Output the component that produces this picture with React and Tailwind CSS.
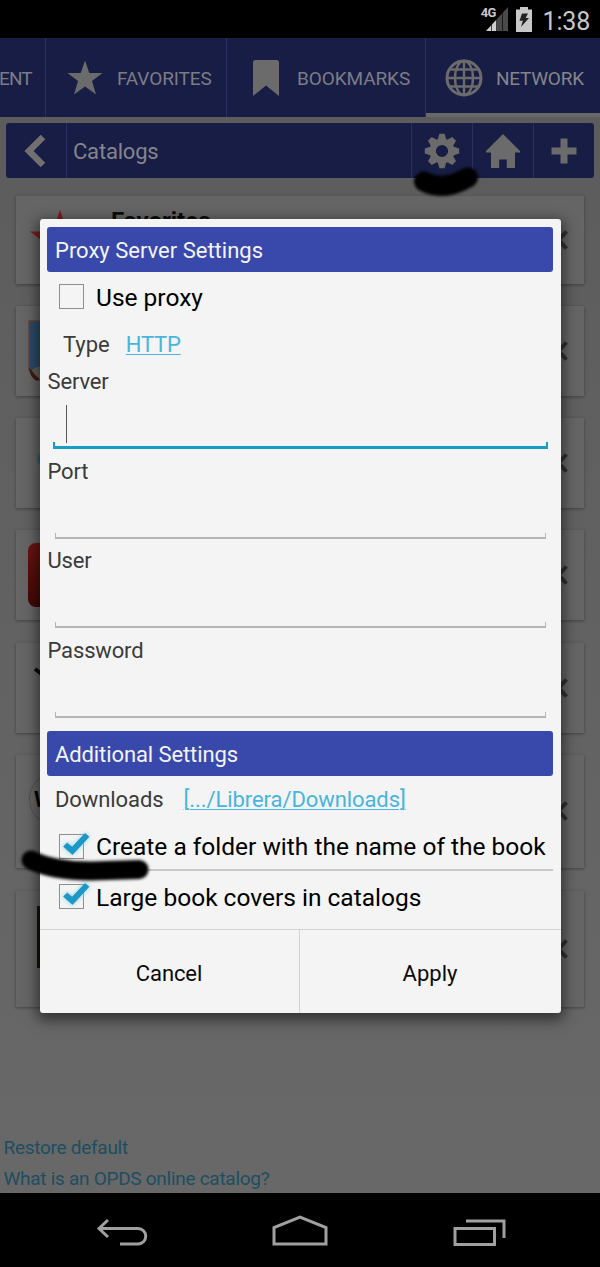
import React from "react";

function Tab({ width, children, active }) {
  return (
    <div className={"relative flex shrink-0 items-center overflow-hidden whitespace-nowrap text-[19px] tracking-[-0.1px] text-[#7c7c84] " + width}>
      {children}
      {active && <div className="absolute inset-x-0 bottom-0 h-1 bg-[#686868]" />}
    </div>
  );
}

function StarIcon({ className }) {
  return (
    <svg viewBox="0 0 36 36" className={className} fill="currentColor">
      <path d="M18 0.5 22.3 13H35.5L25 21 29 34.5 18 26.6 7 34.5 11 21 .5 13h13.2z" />
    </svg>
  );
}

function GearIcon() {
  const teeth = [0, 45, 90, 135, 180, 225, 270, 315];
  return (
    <svg viewBox="-18 -18 36 36" className="h-9 w-9 text-[#6b6b6b]">
      {teeth.map((a) => (
        <path key={a} d="M-4.4-11-2.6-17.2h5.2l1.8 6.200z" fill="currentColor" transform={`rotate(${a})`} />
      ))}
      <circle r="9.3" fill="none" stroke="currentColor" strokeWidth="6.400" />
    </svg>
  );
}

const thumbs = {
  star: <StarIcon className="ml-[13px] h-[62px] w-[62px] text-[#7c1f22]" />,
  boat: (
    <svg viewBox="0 0 60 62" className="ml-3 h-[62px] w-[60px]">
      <path d="M1 1H60V61H1z" fill="#666" />
      <path d="M1 1H60V50H1z" fill="#2c4a66" stroke="#5c4538" strokeWidth="1.5" />
      <path d="M1 48q5 3 11 12l-3 1Q2 58 1 48z" fill="#3f1c17" />
      <path d="M4 50q4-4 9-3v11q-6-1-9-8z" fill="#625e56" />
    </svg>
  ),
  drop: (
    <svg viewBox="0 0 60 60" className="ml-4 h-[60px] w-[60px] blur-[1px]">
      <ellipse cx="9" cy="26" rx="3.500" ry="5" fill="#23586a" />
    </svg>
  ),
  red: <div className="ml-3 h-16 w-16 rounded-lg bg-linear-to-b from-[#6c1411] to-[#3f0906]" />,
  mark: (
    <svg viewBox="0 0 60 60" className="ml-[14px] h-[60px] w-[60px]">
      <path d="M5 11 13 17" stroke="#090909" strokeWidth="4" fill="none" />
    </svg>
  ),
  round: (
    <div className="ml-[13px] flex h-[54px] w-[54px] items-center rounded-full border border-[#505050] pl-1 text-[22px] font-bold text-black">
      W
    </div>
  ),
  book: <div className="ml-[21px] h-[62px] w-11 bg-[#171509]" />,
};

const cards = [
  { id: "star", box: "mt-[17.5px] h-[88px]", title: "Favorites" },
  { id: "boat", box: "mt-[22px] h-[90px]" },
  { id: "drop", box: "mt-[22px] h-[90px]" },
  { id: "red", box: "mt-[22px] h-[90px]" },
  { id: "mark", box: "mt-[23px] h-[90px]" },
  { id: "round", box: "mt-[22px] h-[113px] pb-6" },
  { id: "book", box: "mt-[23px] h-[116px] pb-6" },
];

function Card({ item }) {
  return (
    <div className={"relative mx-4 flex shrink-0 items-center bg-[#656565] shadow-[0_1px_3px_rgba(0,0,0,0.35)] " + item.box}>
      {thumbs[item.id]}
      {item.title && (
        <span className="mb-7 ml-[20px] self-start pt-[11px] text-[24px] leading-7 font-bold text-[#0c0c0c]">{item.title}</span>
      )}
      <svg viewBox="0 0 12 20" className={"ml-auto mr-4 h-5 w-3 " + (item.id === "round" || item.id === "book" ? "translate-y-3" : "")}>
        <path d="M10.500 1.500 2.500 10l8 8.500" fill="none" stroke="#303030" strokeWidth="4" />
      </svg>
    </div>
  );
}

function SectionTitle({ children }) {
  return (
    <div className="mx-[7.5px] flex h-[45px] shrink-0 items-center rounded-[3px] bg-[#3949ab] px-2 pt-0.5 text-[22px] text-[#f4f4f4]">
      {children}
    </div>
  );
}

function Field({ label, focused }) {
  return (
    <div className="flex h-[89.5px] shrink-0 flex-col">
      <span className="mt-[3px] ml-2 text-[22px] leading-7 tracking-[-0.15px] text-[#3b3b3b]">{label}</span>
      <div className="relative mx-[13px] h-[53px]">
        {focused && <div className="absolute top-[9px] left-[13px] h-[38px] w-px bg-[#555]" />}
        <div
          className={
            focused
              ? "absolute inset-x-0 bottom-0 h-[7px] border-x-2 border-b-3 border-[#1a9cc6]"
              : "absolute inset-x-0.5 bottom-0 h-1.5 border-x border-b-2 border-[#b5b5b5]"
          }
        />
      </div>
    </div>
  );
}

function CheckRow({ label, checked, box, lift }) {
  return (
    <div className={"flex shrink-0 items-center pl-[19.5px] " + box}>
      <div className="relative h-[25px] w-[25px] border border-[#8f8f8f]">
        {checked && (
          <svg viewBox="0 0 30 28" className="absolute -top-[4px] left-0 h-7 w-[30px] drop-shadow-[0_0_2px_#6fd0f0]">
            <path d="M3.500 15.500 7.300 12l4.800 4.300L25 2.500l4 3.200L12.500 23.500z" fill="#1c98c8" stroke="#1583b0" strokeWidth="0.6" />
          </svg>
        )}
      </div>
      <span className={"ml-3 text-[24.5px] leading-7 whitespace-nowrap text-black " + (lift ? "pt-0.5" : "pt-[3px]")}>{label}</span>
    </div>
  );
}

function StatusBar() {
  return (
    <div className="flex h-[38px] shrink-0 items-center justify-end bg-black pr-[10px] text-[#c8c8c8]">
      <span className="mb-3 -mr-2.5 text-[13px] font-bold tracking-[-0.8px]">4G</span>
      <svg viewBox="0 0 22 26" className="h-[26px] w-[22px]">
        <path d="M22 1V25H11V13z" fill="#4a4a4a" />
        <path d="M11 13V25H0z" fill="#d0d0d0" />
        <path d="M5.5 17V25M10.5 12V25M16.5 6V25" stroke="#000" strokeWidth=".7" />
      </svg>
      <svg viewBox="0 0 16 25" className="ml-2 h-[25px] w-4">
        <path d="M4 0h8v2.5h4V25H0V2.5h4z" fill="#c8c8c8" />
        <path d="M6 6.5h6L9.7 11H13L5 20l1.8-6.2H3.5z" fill="#222" />
      </svg>
      <span className="ml-[11px] pt-1.5 text-[25px] leading-7 tracking-[-0.2px]">1:38</span>
    </div>
  );
}

function Dialog() {
  return (
    <div className="absolute top-[219px] left-[39.5px] flex h-[793.5px] w-[521px] flex-col rounded-[3px] bg-[#f4f4f4] pt-[7.5px] shadow-[0_4px_13px_3px_rgba(0,0,0,0.5)]">
      <SectionTitle>Proxy Server Settings</SectionTitle>
      <CheckRow label="Use proxy" box="h-[50px]" lift />
      <div className="flex h-[43.5px] shrink-0 items-center pt-0.5 pl-[23.5px] text-[22px]">
        <span className="text-[#3b3b3b]">Type</span>
        <span className="ml-4 tracking-[-0.2px] text-[#48b5de] underline decoration-1 underline-offset-2">HTTP</span>
      </div>
      <Field label="Server" focused />
      <Field label="Port" />
      <Field label="User" />
      <Field label="Password" />
      <div className="h-2 shrink-0" />
      <SectionTitle>
        <span className="tracking-[-0.1px]">Additional Settings</span>
      </SectionTitle>
      <div className="flex h-[47px] shrink-0 items-center pl-[15.5px] text-[22px] tracking-[-0.08px]">
        <span className="text-[#3b3b3b]">Downloads</span>
        <span className="ml-5 text-[#48b5de] underline decoration-1 underline-offset-2">[.../Librera/Downloads]</span>
      </div>
      <CheckRow label="Create a folder with the name of the book" checked box="h-[46px]" lift />
      <div className="mx-[7.5px] h-0.5 shrink-0 bg-[#c8c8c8]" />
      <CheckRow label="Large book covers in catalogs" checked box="h-[50px] mb-[8px]" />
      <div className="flex grow border-t border-[#d2d2d2] text-[22px] text-[#0a0a0a]">
        <div className="flex w-[260px] items-center justify-center border-r border-[#d2d2d2] pt-1 tracking-[-0.1px]">Cancel</div>
        <div className="flex grow items-center justify-center pt-1">Apply</div>
      </div>
    </div>
  );
}

export default function App() {
  return (
    <div
      className="relative flex h-[1267px] w-[600px] flex-col overflow-hidden bg-linear-to-b from-[#5b5b5b] to-[#696969]"
      style={{ fontFamily: 'Roboto, "Liberation Sans", sans-serif' }}
    >
      <StatusBar />
      <div className="flex h-[79px] shrink-0 divide-x divide-[#2b3060] bg-[#181d45]">
        <Tab width="w-[46px]">
          <span className="-ml-px pt-[3px] tracking-[-0.9px]">ENT</span>
        </Tab>
        <Tab width="w-[181px]">
          <StarIcon className="ml-[21px] h-9 w-9 text-[#6b6b6b]" />
          <span className="ml-3.5 pt-[3px]">FAVORITES</span>
        </Tab>
        <Tab width="w-[199px]">
          <svg viewBox="0 0 26 36" className="ml-[26px] h-9 w-[26px]">
            <path d="M2.5 0h21Q26 0 26 2.5V36L13 25.5 0 36V2.5Q0 0 2.5 0z" fill="#6b6b6b" />
          </svg>
          <span className="ml-[18px] pt-[3px]">BOOKMARKS</span>
        </Tab>
        <Tab width="w-[174px]" active>
          <svg viewBox="-19 -19 38 38" className="ml-[19px] h-[38px] w-[38px]" fill="none" stroke="#6b6b6b" strokeWidth="2.400">
            <circle r="17" strokeWidth="3" />
            <ellipse rx="9" ry="17" />
            <path d="M0-17V17M-17 0H17M-14.5-8.500H14.5M-14.5 8.500H14.5" />
          </svg>
          <span className="ml-[13px] pt-[3px] tracking-[-0.25px] text-[#85858b]">NETWORK</span>
        </Tab>
      </div>
      <div className="mx-1.5 mt-1.5 flex h-[55px] shrink-0 divide-x divide-[#2b3060] rounded-[3px] bg-[#181d45]">
        <div className="flex w-[61px] items-center pl-[18px]">
          <svg viewBox="0 0 22 34" className="h-[34px] w-[22px]">
            <path d="M19 3 5 17l14 14" fill="none" stroke="#707070" strokeWidth="6.5" />
          </svg>
        </div>
        <div className="flex w-[345px] items-center pt-0.5 pl-1.5 text-[22px] tracking-[-0.2px] text-[#85858b]">Catalogs</div>
        <div className="flex w-[61px] items-center justify-center">
          <GearIcon />
        </div>
        <div className="flex w-[61px] items-center justify-center">
          <svg viewBox="0 0 34 34" className="h-[34px] w-[34px]">
            <path d="M17 0 34 17v1.500h-5V34h-8.200V25.500h-7.600V34H5V18.500H0V17z" fill="#6b6b6b" />
          </svg>
        </div>
        <div className="flex grow items-center justify-center">
          <svg viewBox="0 0 26 26" className="h-[26px] w-[26px]">
            <path d="M13 .5V25.500M.5 13H25.500" stroke="#6b6b6b" strokeWidth="7" />
          </svg>
        </div>
      </div>
      {cards.map((item) => (
        <Card key={item.id} item={item} />
      ))}
      <div className="mt-auto -mb-px flex flex-col pl-[3.5px] text-[19px] leading-[31px] tracking-[-0.28px] text-[#1d4e60]">
        <span>Restore default</span>
        <span>What is an OPDS online catalog?</span>
      </div>
      <div className="z-0 flex h-[74px] shrink-0 items-center bg-black pt-1.5">
        <svg viewBox="0 0 600 74" className="h-[74px] w-[600px]" fill="none" stroke="#a0a0a0" strokeWidth="3">
          <path d="M108 24 99 32.500 108 41M99 32.500H138A7.500 7.500 0 0 1 138 48H120" />
          <path d="M274 48V31.500L300 21 326 31.500V48z" />
          <path d="M455 32.500H494.500V48.500H455zM466 25H504V42" />
        </svg>
      </div>
      <Dialog />
      <svg viewBox="0 0 76 40" className="absolute top-[161px] left-[409px] h-10 w-[76px] overflow-visible blur-[1.5px]">
        <path d="M15 20.500Q34 31 59 16.500" fill="none" stroke="#000" strokeWidth="20" strokeLinecap="round" strokeLinejoin="round" />
      </svg>
      <svg viewBox="0 0 140 44" className="absolute top-[843px] left-[15px] h-11 w-[140px] overflow-visible blur-[1.5px]">
        <path d="M16 17Q38 28 76 28L124 26.500" fill="none" stroke="#000" strokeWidth="19" strokeLinecap="round" />
      </svg>
    </div>
  );
}
